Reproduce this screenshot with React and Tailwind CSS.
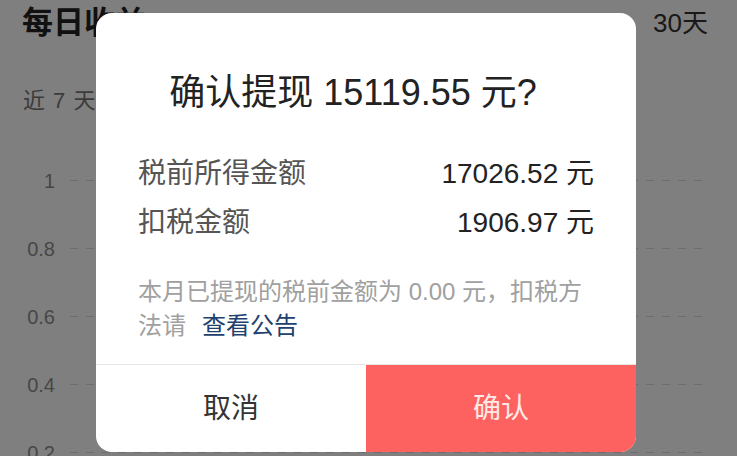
import React from 'react'

const ticks = ['1', '0.8', '0.6', '0.4', '0.2']

function Background() {
  return (
    <div className="flex h-full flex-col">
      <div className="flex h-[56px] items-center justify-between pl-[22px] pr-[29px]">
        <span className="text-[31px] font-semibold text-[#222]">每日收益</span>
        <span className="text-[26px] text-[#333]">30天</span>
      </div>
      <div className="mt-[37px] pl-[23px] text-[22px] leading-[34px] tracking-[1px] text-[#777]">近 7 天</div>

      {/* chart grid */}
      <div className="mt-[49px] flex flex-col gap-[40px]">
        {ticks.map((t) => (
          <div key={t} className="flex h-[28px] items-center">
            <span className="w-[55px] text-right text-[20px] text-[#8e8e8e]">{t}</span>
            <div className="ml-[15px] mr-[27px] h-px flex-1 bg-[repeating-linear-gradient(90deg,#dadada_0_8px,transparent_8px_16px)]" />
          </div>
        ))}
      </div>
    </div>
  )
}

function ConfirmDialog() {
  return (
    <div className="absolute left-[96px] top-[13px] flex h-[439px] w-[540px] flex-col overflow-hidden rounded-[16px] bg-white">
      <div className="flex-1 px-[42px] pt-[58px]">
        <h2 className="pr-[26px] text-center text-[36px] leading-[43px] text-[#222]">
          确认提现 15119.55 元?
        </h2>

        <div className="mt-[35px]">
          <div className="flex h-[49px] items-center justify-between text-[28px]">
            <span className="text-[#555]">税前所得金额</span>
            <span className="text-[#222]">17026.52 元</span>
          </div>
          <div className="flex h-[49px] items-center justify-between text-[28px]">
            <span className="text-[#555]">扣税金额</span>
            <span className="text-[#222]">1906.97 元</span>
          </div>
        </div>

        <p className="mt-[28px] text-[24px] leading-[34px] text-[#a0a0a0]">
          本月已提现的税前金额为 0.00 元，扣税方法请
          <a className="ml-[16px] text-[#21406e]">查看公告</a>
        </p>
      </div>

      <div className="flex h-[88px] border-t border-[#e6e6e6]">
        <button className="flex-1 text-[28px] text-[#333]">取消</button>
        <button className="flex-1 bg-[#fe6260] text-[28px] text-[#ffeae6]">确认</button>
      </div>
    </div>
  )
}

export default function App() {
  return (
    <div className="relative h-[456px] w-[737px] overflow-hidden bg-white font-['Liberation_Sans','Noto_Sans_CJK_SC',sans-serif]">
      <Background />
      {/* mask */}
      <div className="absolute inset-0 bg-black/50" />
      <ConfirmDialog />
    </div>
  )
}
